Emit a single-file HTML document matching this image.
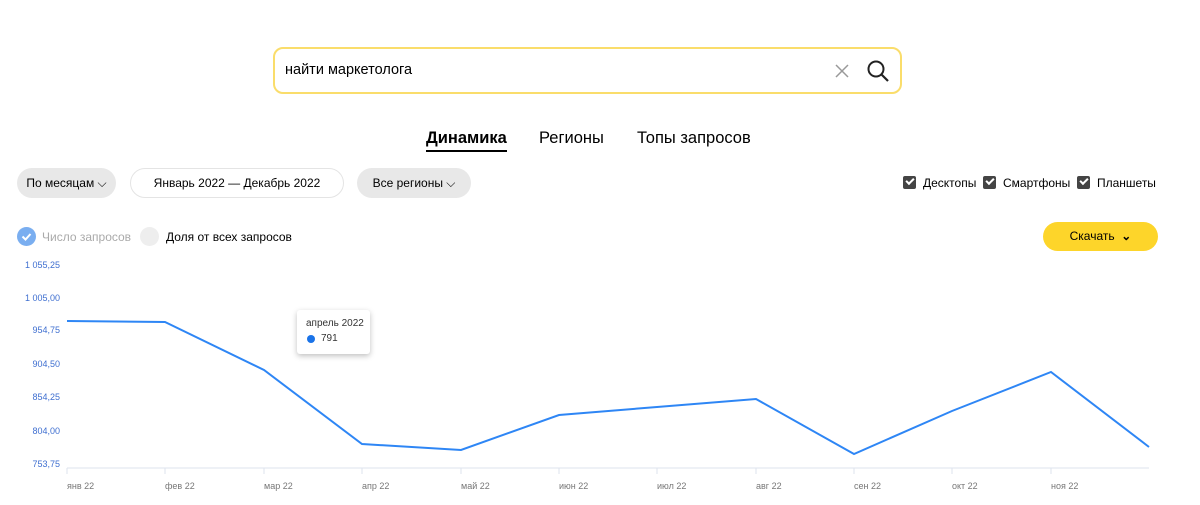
<!DOCTYPE html>
<html><head><meta charset="utf-8"><style>
body{margin:0;width:1200px;height:505px;background:#fff;font-family:"Liberation Sans",Arial,sans-serif;position:relative;overflow:hidden;color:#000}
.a{position:absolute}
.pill{position:absolute;height:30px;border-radius:15px;background:#e8e8e8;font-size:12px;line-height:30px;text-align:center}
.cb{display:inline-block;width:13px;height:13px;background:#444;border-radius:2px;vertical-align:-2px;margin-right:7px;position:relative}
.cb:after{content:"";position:absolute;left:3px;top:2px;width:6px;height:3px;border-left:2px solid #fff;border-bottom:2px solid #fff;transform:rotate(-45deg)}
.yl{position:absolute;right:1140px;font-size:9px;color:#3f6fd0;text-align:right}
.xl{position:absolute;top:481px;font-size:9px;color:#777}
</style></head><body>
<div class="a" style="left:273px;top:47px;width:625px;height:43px;border:2px solid #fadd6b;border-radius:10px"></div>
<div class="a" style="left:285px;top:62px;font-size:14.5px">найти маркетолога</div>
<svg class="a" style="left:835px;top:64px" width="14" height="14"><path d="M1 1L13 13M13 1L1 13" stroke="#999" stroke-width="1.5"/></svg>
<svg class="a" style="left:866px;top:59px" width="24" height="24"><circle cx="10" cy="10" r="7.5" fill="none" stroke="#222" stroke-width="2"/><path d="M15.5 15.5L22 22" stroke="#222" stroke-width="2.2"/></svg>
<div class="a" style="left:426px;top:129px;font-size:16.5px;font-weight:bold">Динамика</div>
<div class="a" style="left:426px;top:150px;width:81px;height:2px;background:#000"></div>
<div class="a" style="left:539px;top:129px;font-size:16.5px">Регионы</div>
<div class="a" style="left:637px;top:129px;font-size:16.5px">Топы запросов</div>
<div class="pill" style="left:17px;top:168px;width:99px">По месяцам ⌵</div>
<div class="pill" style="left:130px;top:168px;width:212px;background:#fff;border:1px solid #e4e4e4;height:28px;line-height:28px">Январь 2022 — Декабрь 2022</div>
<div class="pill" style="left:357px;top:168px;width:114px">Все регионы ⌵</div>
<div class="a" style="left:903px;top:176px;font-size:12px"><span class="cb"></span>Десктопы &nbsp;<span class="cb"></span>Смартфоны &nbsp;<span class="cb"></span>Планшеты</div>
<div class="a" style="left:17px;top:227px;width:19px;height:19px;border-radius:50%;background:#7aaef0"></div>
<svg class="a" style="left:17px;top:227px" width="19" height="19"><path d="M5.5 9.5L8.5 12.5L13.5 7" fill="none" stroke="#fff" stroke-width="2"/></svg>
<div class="a" style="left:42px;top:230px;font-size:12px;color:#aaa">Число запросов</div>
<div class="a" style="left:140px;top:227px;width:19px;height:19px;border-radius:50%;background:#eee"></div>
<div class="a" style="left:166px;top:230px;font-size:12px">Доля от всех запросов</div>
<div class="a" style="left:1043px;top:222px;width:115px;height:29px;border-radius:15px;background:#fdd52a;font-size:12px;line-height:29px;text-align:center">Скачать &nbsp;<b>⌄</b></div>
<div class="yl" style="top:260px">1 055,25</div>
<div class="yl" style="top:293px">1 005,00</div>
<div class="yl" style="top:325px">954,75</div>
<div class="yl" style="top:359px">904,50</div>
<div class="yl" style="top:392px">854,25</div>
<div class="yl" style="top:426px">804,00</div>
<div class="yl" style="top:459px">753,75</div>
<svg class="a" style="left:0;top:0" width="1200" height="505">
<path d="M67 468H1149M67 468v6M165 468v6M264 468v6M362 468v6M461 468v6M559 468v6M657 468v6M756 468v6M854 468v6M952 468v6M1051 468v6" stroke="#dde3ee" stroke-width="1"/>
<polyline fill="none" stroke="#2e86f5" stroke-width="2" points="67,321 165,322 264,370 362,444 461,450 559,415 657,407 756,399 854,454 952,411 1051,372 1149,447"/>
</svg>
<div class="xl" style="left:67px">янв 22</div><div class="xl" style="left:165px">фев 22</div><div class="xl" style="left:264px">мар 22</div><div class="xl" style="left:362px">апр 22</div><div class="xl" style="left:461px">май 22</div><div class="xl" style="left:559px">июн 22</div><div class="xl" style="left:657px">июл 22</div><div class="xl" style="left:756px">авг 22</div><div class="xl" style="left:854px">сен 22</div><div class="xl" style="left:952px">окт 22</div><div class="xl" style="left:1051px">ноя 22</div>
<div class="a" style="left:297px;top:310px;width:73px;height:44px;background:#fff;box-shadow:0 2px 6px rgba(0,0,0,.25);border-radius:3px"></div>
<div class="a" style="left:306px;top:318px;font-size:10px;color:#333">апрель 2022</div>
<div class="a" style="left:307px;top:335px;width:8px;height:8px;border-radius:50%;background:#1a73e8"></div>
<div class="a" style="left:321px;top:333px;font-size:10px;color:#333">791</div>
</body></html>
